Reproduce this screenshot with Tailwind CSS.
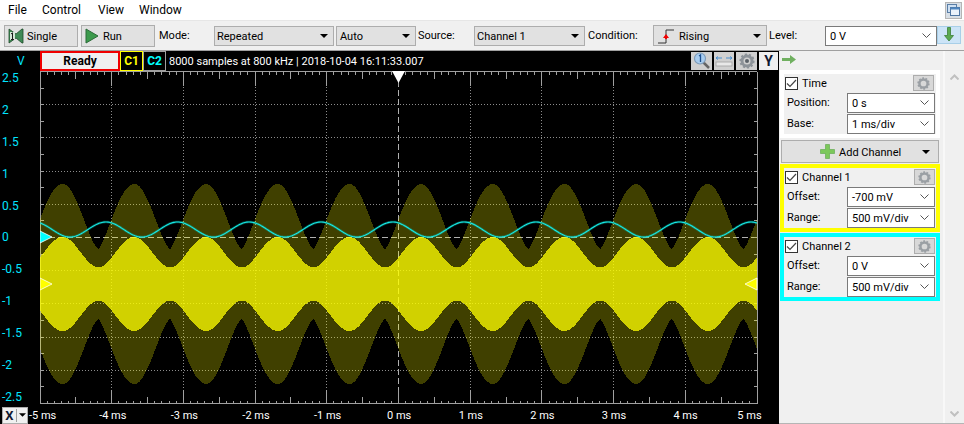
<!DOCTYPE html>
<html>
<head>
<meta charset="utf-8">
<script src="https://cdn.jsdelivr.net/npm/@tailwindcss/browser@4"></script>
</head>
<body class="w-[964px] h-[424px] overflow-hidden bg-white font-['Roboto',sans-serif] text-[11px] leading-none text-black">

<!-- menu bar -->
<div class="h-[20px] flex items-center relative bg-white text-[12px]">
  <span class="ml-[8px] w-[34px]">File</span>
  <span class="w-[56px]">Control</span>
  <span class="w-[41px]">View</span>
  <span>Window</span>
  <div class="ml-auto mr-[2px] w-[17px] h-[17px] bg-[#d8dfe6] border border-[#b5b5b5] flex items-center justify-center">
    <svg width="13" height="13" viewBox="0 0 13 13"><rect x="0.5" y="0.5" width="9" height="8" fill="#cfe0f2" stroke="#5a7ea6"/><rect x="3.5" y="3.5" width="9" height="8" fill="#eaf2fb" stroke="#4f76a3"/><rect x="3.5" y="3.5" width="9" height="2" fill="#4f86c0"/></svg>
  </div>
</div>

<!-- toolbar -->
<div class="h-[31px] bg-[#f0f0f0] border-t border-t-[#e6e6e6] border-b border-b-[#a0a0a0] flex items-center pl-[4px]">
  <div class="w-[74px] h-[22px] bg-[#e1e1e1] border border-[#adadad] flex items-center pl-[3px] gap-[3px]">
    <svg width="16" height="16" viewBox="0 0 16 16"><path d="M1 1L8 6L14 1H15V15H14L8 10L1 15Z" fill="#3f8a55" stroke="#1f4a2a" stroke-width="0.8"/><rect x="2" y="4" width="5" height="8" fill="#d4e6d8"/><path d="M3 6L4.5 4.8V11.5M3 11.5H6" fill="none" stroke="#1a1a1a" stroke-width="1"/></svg>
    <span class="mt-[1px]">Single</span>
  </div>
  <div class="ml-[3px] w-[74px] h-[22px] bg-[#e1e1e1] border border-[#adadad] flex items-center pl-[3px] gap-[4px]">
    <svg width="14" height="16" viewBox="0 0 14 16"><path d="M1 1L13 8L1 15Z" fill="#3c9a4c" stroke="#2b6a38"/></svg>
    <span class="mt-[1px]">Run</span>
  </div>
  <span class="ml-[4px] w-[55px] -mt-[1px]">Mode:</span>
  <div class="w-[120px] h-[20px] bg-[#e1e1e1] border border-[#adadad] flex items-center justify-between pl-[2px] pr-[5px]">
    <span class="mt-[1px]">Repeated</span><svg width="8" height="4" viewBox="0 0 8 4"><path d="M0 0H8L4 4Z" fill="#000"/></svg>
  </div>
  <div class="ml-[2px] w-[80px] h-[20px] bg-[#e1e1e1] border border-[#adadad] flex items-center justify-between pl-[3px] pr-[5px]">
    <span class="mt-[1px]">Auto</span><svg width="8" height="4" viewBox="0 0 8 4"><path d="M0 0H8L4 4Z" fill="#000"/></svg>
  </div>
  <span class="ml-[2px] w-[56px] -mt-[1px]">Source:</span>
  <div class="w-[111px] h-[20px] bg-[#e1e1e1] border border-[#adadad] flex items-center justify-between pl-[2px] pr-[5px]">
    <span class="mt-[1px]">Channel 1</span><svg width="8" height="4" viewBox="0 0 8 4"><path d="M0 0H8L4 4Z" fill="#000"/></svg>
  </div>
  <span class="ml-[3px] w-[65px] -mt-[1px]">Condition:</span>
  <div class="w-[114px] h-[21px] bg-[#e1e1e1] border border-[#adadad] flex items-center justify-between pl-[4px] pr-[5px]">
    <div class="flex items-center gap-[3px]">
      <svg width="18" height="16" viewBox="0 0 18 16"><path d="M0 15H8V2H16" fill="none" stroke="#333" stroke-width="1"/><path d="M8 6L11 10H5Z" fill="#f00000"/><rect x="7" y="9" width="2" height="2" fill="#f00000"/></svg>
      <span class="mt-[1px]">Rising</span>
    </div>
    <svg width="8" height="4" viewBox="0 0 8 4"><path d="M0 0H8L4 4Z" fill="#000"/></svg>
  </div>
  <span class="ml-[2px] w-[56px] -mt-[1px]">Level:</span>
  <div class="w-[112px] h-[20px] bg-white border border-[#7a7a7a] flex items-center justify-between pl-[4px] pr-[5px]">
    <span class="mt-[1px]">0 V</span><svg width="9" height="5" viewBox="0 0 9 5"><path d="M0.5 0.5L4.5 4.5L8.5 0.5" fill="none" stroke="#555"/></svg>
  </div>
  <div class="w-[24px] h-[18px] -mt-[2px] bg-[#cce4f7] border border-[#a8cfe8] flex items-center justify-center">
    <svg width="10" height="15" viewBox="0 0 10 15"><path d="M3.5 0.5H6.5V8.5H9.5L5 14L0.5 8.5H3.5Z" fill="#5aaa50" stroke="#3c7f38" stroke-width="0.8"/></svg>
  </div>
</div>

<!-- main -->
<div class="flex h-[373px]">
  <!-- scope -->
  <div class="w-[779px] bg-black flex flex-col">
    <!-- status row -->
    <div class="h-[20px] flex items-stretch">
      <span class="w-[40px] pl-[17px] text-[#00e5ff] flex items-center text-[12px]">V</span>
      <div class="w-[80px] border-2 border-[#f00000] bg-[#f0f0f0] font-bold text-[12px] flex items-center justify-center">Ready</div>
      <div class="w-[23px] border border-[#ffff00] text-[#ffff00] font-bold text-[12px] flex items-center justify-center">C1</div>
      <div class="w-[23px] border border-[#a0a0a0] text-[#00ffff] font-bold text-[12px] flex items-center justify-center">C2</div>
      <span class="ml-[3px] text-white flex items-center w-[522px] shrink-0">8000 samples at 800 kHz | 2018-10-04 16:11:33.007</span>
      <div class="flex items-center gap-[2px] pb-[1px]">
        <div class="w-[21px] h-[18px] bg-[#d0d0d0] flex items-center justify-center">
          <svg width="18" height="17" viewBox="0 0 18 17"><path d="M10 10L16 16" stroke="#666" stroke-width="2.5"/><circle cx="7" cy="6.5" r="5.5" fill="#a8cdf0" stroke="#7f9cb8" stroke-width="1.2"/><path d="M6 4L7.5 3V10" fill="none" stroke="#1c4f8f" stroke-width="1.3"/></svg>
        </div>
        <div class="w-[20px] h-[18px] bg-[#d0d0d0] flex items-center justify-center">
          <svg width="18" height="14" viewBox="0 0 18 14"><path d="M1 4H7M1 4L3 2.5M1 4L3 5.5M17 4H11M17 4L15 2.5M17 4L15 5.5" fill="none" stroke="#4a90d0"/><rect x="1" y="8" width="16" height="4" fill="#e8e8e8" stroke="#a0a0a0" stroke-width="0.8"/></svg>
        </div>
        <div class="w-[21px] h-[18px] bg-[#d0d0d0] flex items-center justify-center">
          <svg width="16" height="16" viewBox="0 0 16 16"><circle cx="8" cy="8" r="5" fill="none" stroke="#8d9399" stroke-width="3"/><circle cx="8" cy="8" r="6.6" fill="none" stroke="#8d9399" stroke-width="2" stroke-dasharray="2.2 1.9"/><circle cx="8" cy="8" r="2" fill="#5b6269"/></svg>
        </div>
        <div class="w-[19px] h-[18px] bg-[#f0f0f0] font-bold text-[14px] text-[#101830] flex items-center justify-center">Y</div>
      </div>
    </div>

    <!-- plot row -->
    <div class="h-[335px] flex">
      <div class="w-[40px] h-[333px] pl-[2px] flex flex-col justify-between text-[#00e5ff] text-[12px] leading-[14px]">
        <span>2.5</span><span>2</span><span>1.5</span><span>1</span><span>0.5</span><span>0</span><span>-0.5</span><span>-1</span><span>-1.5</span><span>-2</span><span>-2.5</span>
      </div>
      <svg id="plot" width="739" height="335" viewBox="0 0 739 335" class="block">
        <g id="grid"></g>
        <path id="dark" fill="#ffff00" fill-opacity="0.25" shape-rendering="crispEdges"/>
        <path id="bright" fill="#ffff00" fill-opacity="0.76" shape-rendering="crispEdges"/>
        <path id="c2h" fill="none" stroke="#00c8b0" stroke-opacity="0.35" stroke-width="2.6"/>
        <path id="c2" fill="none" stroke="#18e8e8" stroke-width="1.1"/>
        <path d="M0 160L12 166L0 172Z" fill="#00ffff" stroke="#fff" stroke-width="0.8"/>
        <path d="M0 207L12 213L0 219Z" fill="#ffff00" stroke="#fff" stroke-width="0.8"/>
        <path d="M717 207L705 213L717 219Z" fill="#ffff00" stroke="#fff" stroke-width="0.8"/>
        <path d="M352 0H365L358.5 12Z" fill="#fff"/>
      </svg>
    </div>

    <!-- x axis row -->
    <div class="h-[18px] flex items-center text-white">
      <div class="ml-[2px] w-[26px] h-[17px] bg-[#f0f0f0] border border-[#adadad] flex items-center text-[#101830] font-bold text-[13px]">
        <span class="w-[14px] text-center border-r border-r-[#a0a0a0]">X</span>
        <svg class="ml-[2px]" width="7" height="4" viewBox="0 0 8 4"><path d="M0 0H8L4 4Z" fill="#000"/></svg>
      </div>
      <span class="ml-[1px] w-[48px]">-5 ms</span>
      <span class="w-[71.6px] text-center">-4 ms</span>
      <span class="w-[71.6px] text-center">-3 ms</span>
      <span class="w-[71.6px] text-center">-2 ms</span>
      <span class="w-[71.6px] text-center">-1 ms</span>
      <span class="w-[71.6px] text-center">0 ms</span>
      <span class="w-[71.6px] text-center">1 ms</span>
      <span class="w-[71.6px] text-center">2 ms</span>
      <span class="w-[71.6px] text-center">3 ms</span>
      <span class="w-[71.6px] text-center">4 ms</span>
      <span class="ml-[16px]">5 ms</span>
    </div>
  </div>

  <!-- right panel -->
  <div class="w-[185px] bg-[#f0f0f0] flex border-b border-b-[#b5b5b5]">
    <div class="w-[165px] pl-[2px] pt-[4px] flex flex-col">
      <div class="h-[15px] pl-[1px]">
        <svg width="14" height="9" viewBox="0 0 14 9"><path d="M0 3H8V0L14 4.5L8 9V6H0Z" fill="#70b060"/></svg>
      </div>
      <!-- Time -->
      <div class="w-[160px] h-[68px] -ml-[1px] border-[4px] border-[#ffffff] flex flex-col">
        <div class="h-[18px] flex items-center">
          <span class="ml-[1px] w-[13px] h-[13px] bg-white border border-[#333] flex items-center justify-center"><svg width="11" height="9" viewBox="0 0 11 9"><path d="M1 4.5L4 7.5L10 1" fill="none" stroke="#444" stroke-width="1.2"/></svg></span>
          <span class="ml-[4px]">Time</span>
          <div class="ml-auto w-[21px] h-[16px] bg-[#d8d8d8] border border-[#adadad] flex items-center justify-center mr-[2px]"><svg width="13" height="13" viewBox="0 0 16 16"><circle cx="8" cy="8" r="5" fill="none" stroke="#9a9fa4" stroke-width="3"/><circle cx="8" cy="8" r="6.6" fill="none" stroke="#9a9fa4" stroke-width="2" stroke-dasharray="2.2 1.9"/></svg></div>
        </div>
        <div class="h-[21px] flex items-center">
          <span class="ml-[2px] w-[61px] -mt-[1px] pl-[1px]">Position:</span>
          <div class="w-[88px] h-[20px] bg-white border border-[#7a7a7a] flex items-center justify-between pl-[4px] pr-[5px]"><span class="mt-[1px]">0 s</span><svg width="9" height="5" viewBox="0 0 9 5"><path d="M0.5 0.5L4.5 4.5L8.5 0.5" fill="none" stroke="#555"/></svg></div>
        </div>
        <div class="h-[21px] flex items-center">
          <span class="ml-[2px] w-[61px] -mt-[1px] pl-[1px]">Base:</span>
          <div class="w-[88px] h-[20px] bg-white border border-[#7a7a7a] flex items-center justify-between pl-[4px] pr-[5px]"><span class="mt-[1px]">1 ms/div</span><svg width="9" height="5" viewBox="0 0 9 5"><path d="M0.5 0.5L4.5 4.5L8.5 0.5" fill="none" stroke="#555"/></svg></div>
        </div>
      </div>
      <!-- Add channel -->
      <div class="mt-[2px] w-[158px] h-[23px] bg-[#e1e1e1] border border-[#adadad] flex items-center">
        <svg class="ml-[38px]" width="15" height="15" viewBox="0 0 15 15"><path d="M5.5 0.5H9.5V5.5H14.5V9.5H9.5V14.5H5.5V9.5H0.5V5.5H5.5Z" fill="#7cc85a" stroke="#5aa548" stroke-width="0.6"/></svg>
        <span class="ml-[4px] mt-[1px]">Add Channel</span>
        <svg class="ml-auto mr-[8px]" width="8" height="4" viewBox="0 0 8 4"><path d="M0 0H8L4 4Z" fill="#000"/></svg>
      </div>
      <!-- Channel 1 -->
      <div class="mt-[1px] w-[160px] h-[68px] -ml-[1px] border-[4px] border-[#ffff00] flex flex-col">
        <div class="h-[18px] flex items-center">
          <span class="ml-[1px] w-[13px] h-[13px] bg-white border border-[#333] flex items-center justify-center"><svg width="11" height="9" viewBox="0 0 11 9"><path d="M1 4.5L4 7.5L10 1" fill="none" stroke="#444" stroke-width="1.2"/></svg></span>
          <span class="ml-[4px]">Channel 1</span>
          <div class="ml-auto w-[21px] h-[16px] bg-[#d8d8d8] border border-[#adadad] flex items-center justify-center mr-[1px]"><svg width="13" height="13" viewBox="0 0 16 16"><circle cx="8" cy="8" r="5" fill="none" stroke="#9a9fa4" stroke-width="3"/><circle cx="8" cy="8" r="6.6" fill="none" stroke="#9a9fa4" stroke-width="2" stroke-dasharray="2.2 1.9"/></svg></div>
        </div>
        <div class="h-[21px] flex items-center">
          <span class="ml-[2px] w-[61px] -mt-[1px] pl-[1px]">Offset:</span>
          <div class="w-[88px] h-[20px] bg-white border border-[#7a7a7a] flex items-center justify-between pl-[4px] pr-[5px]"><span class="mt-[1px]">-700 mV</span><svg width="9" height="5" viewBox="0 0 9 5"><path d="M0.5 0.5L4.5 4.5L8.5 0.5" fill="none" stroke="#555"/></svg></div>
        </div>
        <div class="h-[21px] flex items-center">
          <span class="ml-[2px] w-[61px] -mt-[1px] pl-[1px]">Range:</span>
          <div class="w-[88px] h-[20px] bg-white border border-[#7a7a7a] flex items-center justify-between pl-[4px] pr-[5px]"><span class="mt-[1px]">500 mV/div</span><svg width="9" height="5" viewBox="0 0 9 5"><path d="M0.5 0.5L4.5 4.5L8.5 0.5" fill="none" stroke="#555"/></svg></div>
        </div>
      </div>
      <!-- Channel 2 -->
      <div class="mt-[1px] w-[160px] h-[68px] -ml-[1px] border-[4px] border-[#00ffff] flex flex-col">
        <div class="h-[18px] flex items-center">
          <span class="ml-[1px] w-[13px] h-[13px] bg-white border border-[#333] flex items-center justify-center"><svg width="11" height="9" viewBox="0 0 11 9"><path d="M1 4.5L4 7.5L10 1" fill="none" stroke="#444" stroke-width="1.2"/></svg></span>
          <span class="ml-[4px]">Channel 2</span>
          <div class="ml-auto w-[21px] h-[16px] bg-[#d8d8d8] border border-[#adadad] flex items-center justify-center mr-[1px]"><svg width="13" height="13" viewBox="0 0 16 16"><circle cx="8" cy="8" r="5" fill="none" stroke="#9a9fa4" stroke-width="3"/><circle cx="8" cy="8" r="6.6" fill="none" stroke="#9a9fa4" stroke-width="2" stroke-dasharray="2.2 1.9"/></svg></div>
        </div>
        <div class="h-[21px] flex items-center">
          <span class="ml-[2px] w-[61px] -mt-[1px] pl-[1px]">Offset:</span>
          <div class="w-[88px] h-[20px] bg-white border border-[#7a7a7a] flex items-center justify-between pl-[4px] pr-[5px]"><span class="mt-[1px]">0 V</span><svg width="9" height="5" viewBox="0 0 9 5"><path d="M0.5 0.5L4.5 4.5L8.5 0.5" fill="none" stroke="#555"/></svg></div>
        </div>
        <div class="h-[21px] flex items-center">
          <span class="ml-[2px] w-[61px] -mt-[1px] pl-[1px]">Range:</span>
          <div class="w-[88px] h-[20px] bg-white border border-[#7a7a7a] flex items-center justify-between pl-[4px] pr-[5px]"><span class="mt-[1px]">500 mV/div</span><svg width="9" height="5" viewBox="0 0 9 5"><path d="M0.5 0.5L4.5 4.5L8.5 0.5" fill="none" stroke="#555"/></svg></div>
        </div>
      </div>
    </div>
    <!-- scrollbar -->
    <div class="flex-1 ml-[-1px] border-l-2 border-l-[#f8f8f8] flex flex-col items-center justify-between pt-[23px] pb-[6px] pr-[1px]">
      <svg width="9" height="6" viewBox="0 0 9 6"><path d="M0.5 5.5L4.5 1.5L8.5 5.5" fill="none" stroke="#c0c0c0" stroke-width="2"/></svg>
      <svg width="9" height="6" viewBox="0 0 9 6"><path d="M0.5 0.5L4.5 4.5L8.5 0.5" fill="none" stroke="#c0c0c0" stroke-width="2"/></svg>
    </div>
  </div>
</div>

<script>
  var X0 = 0, X1 = 717, Y0 = 166, C1 = 213, PX = 71.7;
  function env(x, lo, hi, p) {
    var c = (1 + Math.cos((x + 40 - 62) / PX * 2 * Math.PI)) / 2;
    return lo + (hi - lo) * Math.pow(c, p);
  }
  function band(lo1, hi1, p1) {
    var top = [], bot = [];
    for (var x = X0; x <= X1; x++) {
      var a = Math.round(env(x, lo1, hi1, p1));
      top.push(x + ' ' + (C1 - a));
      bot.unshift(x + ' ' + (C1 + a));
    }
    return 'M' + top.join('L') + 'L' + bot.join('L') + 'Z';
  }
  document.getElementById('dark').setAttribute('d', band(35, 100, 0.7));
  document.getElementById('bright').setAttribute('d', band(16.5, 47, 0.95));
  var pts = [];
  for (var x = X0; x <= X1; x++) {
    pts.push(x + ' ' + (158.5 + 7.5 * Math.cos((x + 40 - 70) / PX * 2 * Math.PI)).toFixed(2));
  }
  document.getElementById('c2').setAttribute('d', 'M' + pts.join('L'));
  document.getElementById('c2h').setAttribute('d', 'M' + pts.join('L'));

  var g = '', NS = '#a0a0a0', GR = '#8c8c8c';
  function line(x1, y1, x2, y2, col, dash) {
    g += '<line x1="' + x1 + '" y1="' + y1 + '" x2="' + x2 + '" y2="' + y2 + '" stroke="' + col + '"' + (dash ? ' stroke-dasharray="' + dash + '"' : '') + ' shape-rendering="crispEdges"/>';
  }
  var T = 0.5, B = 332.5;
  for (var i = 1; i < 10; i++) {
    var vx = Math.floor(i * PX) + 0.5;
    if (i === 5) line(vx, T, vx, B, '#b0b0b0', '6 3');
    else line(vx, T, vx, B, GR, '1 2');
  }
  for (var j = -4; j <= 4; j++) {
    var hy = Math.round(Y0 + j * 33.2) + 0.5;
    if (j === 0) line(0, hy, X1, hy, '#b0b0b0', '6 3');
    else line(0, hy, X1, hy, GR, '1 2');
  }
  for (var k = 0; k <= 100; k++) {
    var tx = Math.floor(k * PX / 10) + 0.5;
    var len = k % 10 === 0 ? 14 : (k % 5 === 0 ? 7 : 3);
    line(tx, T, tx, T + len, NS);
    line(tx, B, tx, B - len, NS);
  }
  for (var m = 0; m <= 20; m++) {
    var ty = Math.round(m * 16.6) + 0.5;
    line(0.5, ty, 3.5, ty, NS);
    line(X1 - 3, ty, X1, ty, NS);
  }
  line(0.5, T, 0.5, B, NS);
  line(X1 + 0.5, T, X1 + 0.5, B, NS);
  line(0, T, X1, T, NS);
  line(0, B, X1, B, NS);
  document.getElementById('grid').innerHTML = g;
</script>
</body>
</html>
